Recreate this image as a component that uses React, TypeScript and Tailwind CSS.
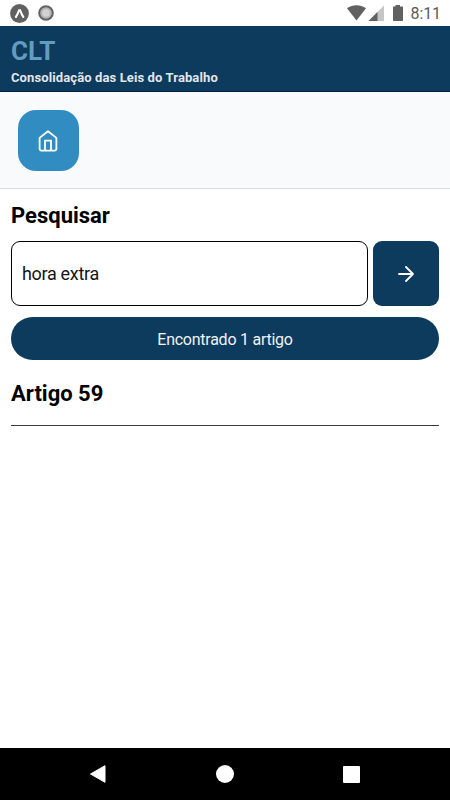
import type { ReactNode } from "react";

type ArticleProps = { number: number };

function StatusBar() {
  return (
    <div className="flex h-[26px] shrink-0 items-center justify-between bg-white pr-[9px] pl-[10px]">
      <div className="flex items-center gap-[9px]">
        <svg width="19" height="19" viewBox="0 0 19 19">
          <circle cx="9.5" cy="9.5" r="9.4" fill="#616161" />
          <path d="M5.9 12.9C7.2 11 8.3 8.4 9.1 6.4h1C10.9 8.4 12 11 13.3 12.9" fill="none" stroke="#fff" strokeWidth="2.1" strokeLinecap="round" />
        </svg>
        <svg width="16" height="16" viewBox="0 0 16 16">
          <circle cx="8" cy="8" r="6.8" fill="#b5b5b5" stroke="#636363" strokeWidth="2" />
          <circle cx="8" cy="8" r="3.8" fill="#d2d2d2" />
        </svg>
      </div>
      <div className="flex items-center">
        <svg width="56" height="16" viewBox="0 0 56 16" fill="#616161">
          <path d="M0 3.2C5.6-.9 13.4-.9 19 3.2L9.5 15.5Z" />
          <path d="M37 .5V16H21.5Z" fill="#c6c6c6" />
          <path d="M30.5 7V16H21.5Z" />
          <path d="M46 1.5h2.5V0h4.5v1.5h2.5a.7.7 0 0 1 .5.7V15.3a.7.7 0 0 1-.7.7H46.7a.7.7 0 0 1-.7-.7V1.5Z" />
        </svg>
        <span className="ml-[8px] pt-[2px] text-[16px] leading-none tracking-[-0.1px] text-[#5a5a5a]">8:11</span>
      </div>
    </div>
  );
}

function Header() {
  return (
    <header className="flex h-[66px] shrink-0 flex-col border-b border-[#031c3b] bg-[#0c3b5d] px-[11px] pt-[9px]">
      <h1 className="text-[26px] leading-[32px] font-bold text-[#639bc1]">CLT</h1>
      <p className="mt-[2px] text-[13px] leading-[18px] font-bold tracking-[0.11px] text-[#e2e6ec]">
        Consolidação das Leis do Trabalho
      </p>
    </header>
  );
}

function HomeIcon() {
  return (
    <svg className="mt-[2px]" width="20" height="22" viewBox="0 0 20 22" fill="none" stroke="#fff" strokeWidth="1.8" strokeLinejoin="round">
      <path d="M1.6 7.9 10 1.2l8.4 6.7v10.9a1.8 1.8 0 0 1-1.8 1.8H3.4a1.8 1.8 0 0 1-1.8-1.8Z" />
      <path d="M7 20.5V10.7h6v9.8" strokeLinejoin="miter" />
    </svg>
  );
}

function ArrowIcon() {
  return (
    <svg width="16" height="16" viewBox="0 0 16 16" fill="none" stroke="#fff" strokeWidth="1.8" strokeLinecap="round" strokeLinejoin="round">
      <path d="M1 8h14M8 1l7 7-7 7" />
    </svg>
  );
}

function Toolbar() {
  return (
    <nav className="flex h-[97px] shrink-0 items-center border-b border-[#d3dceb] bg-[#f9fafc] px-[17.5px]">
      <button className="flex size-[61px] items-center justify-center rounded-[18px] bg-[#318cc2]">
        <HomeIcon />
      </button>
    </nav>
  );
}

function SectionTitle({ children }: { children: ReactNode }) {
  return <h2 className="text-[22px] leading-[26px] font-bold text-black">{children}</h2>;
}

function Article({ number }: ArticleProps) {
  return (
    <article className="mt-[21px] border-b border-[#3a3a3a] pb-[18px]">
      <SectionTitle>Artigo {number}</SectionTitle>
    </article>
  );
}

function NavigationBar() {
  return (
    <div className="flex h-[52px] shrink-0 items-center justify-between bg-black px-[90px]">
      <svg width="16" height="18" viewBox="0 0 16 18">
        <path d="M.5 9 15 .7v16.6Z" fill="#fff" stroke="#fff" strokeLinejoin="round" />
      </svg>
      <div className="size-[18px] rounded-full bg-white" />
      <div className="size-[17px] rounded-[1px] bg-white" />
    </div>
  );
}

export default function App() {
  return (
    <div className="flex h-[800px] w-[450px] flex-col bg-white font-['Roboto',sans-serif]">
      <StatusBar />
      <Header />
      <Toolbar />
      <main className="flex-1 px-[11px] pt-[14px]">
        <SectionTitle>Pesquisar</SectionTitle>
        <div className="mt-[12px] flex gap-[5px]">
          <input
            className="h-[65px] min-w-0 flex-1 rounded-[9px] border border-black px-[10px] text-[18px] tracking-[-0.32px] text-[#151515] outline-none"
            defaultValue="hora extra"
          />
          <button className="flex h-[65px] w-[66px] items-center justify-center rounded-[9px] bg-[#0c3b5d]">
            <ArrowIcon />
          </button>
        </div>
        <div className="mt-[11px] flex h-[43px] items-center justify-center rounded-full bg-[#0c3b5d] pt-[2px] text-[16px] tracking-[-0.25px] text-[#f0f3f6]">
          Encontrado 1 artigo
        </div>
        <Article number={59} />
      </main>
      <NavigationBar />
    </div>
  );
}
